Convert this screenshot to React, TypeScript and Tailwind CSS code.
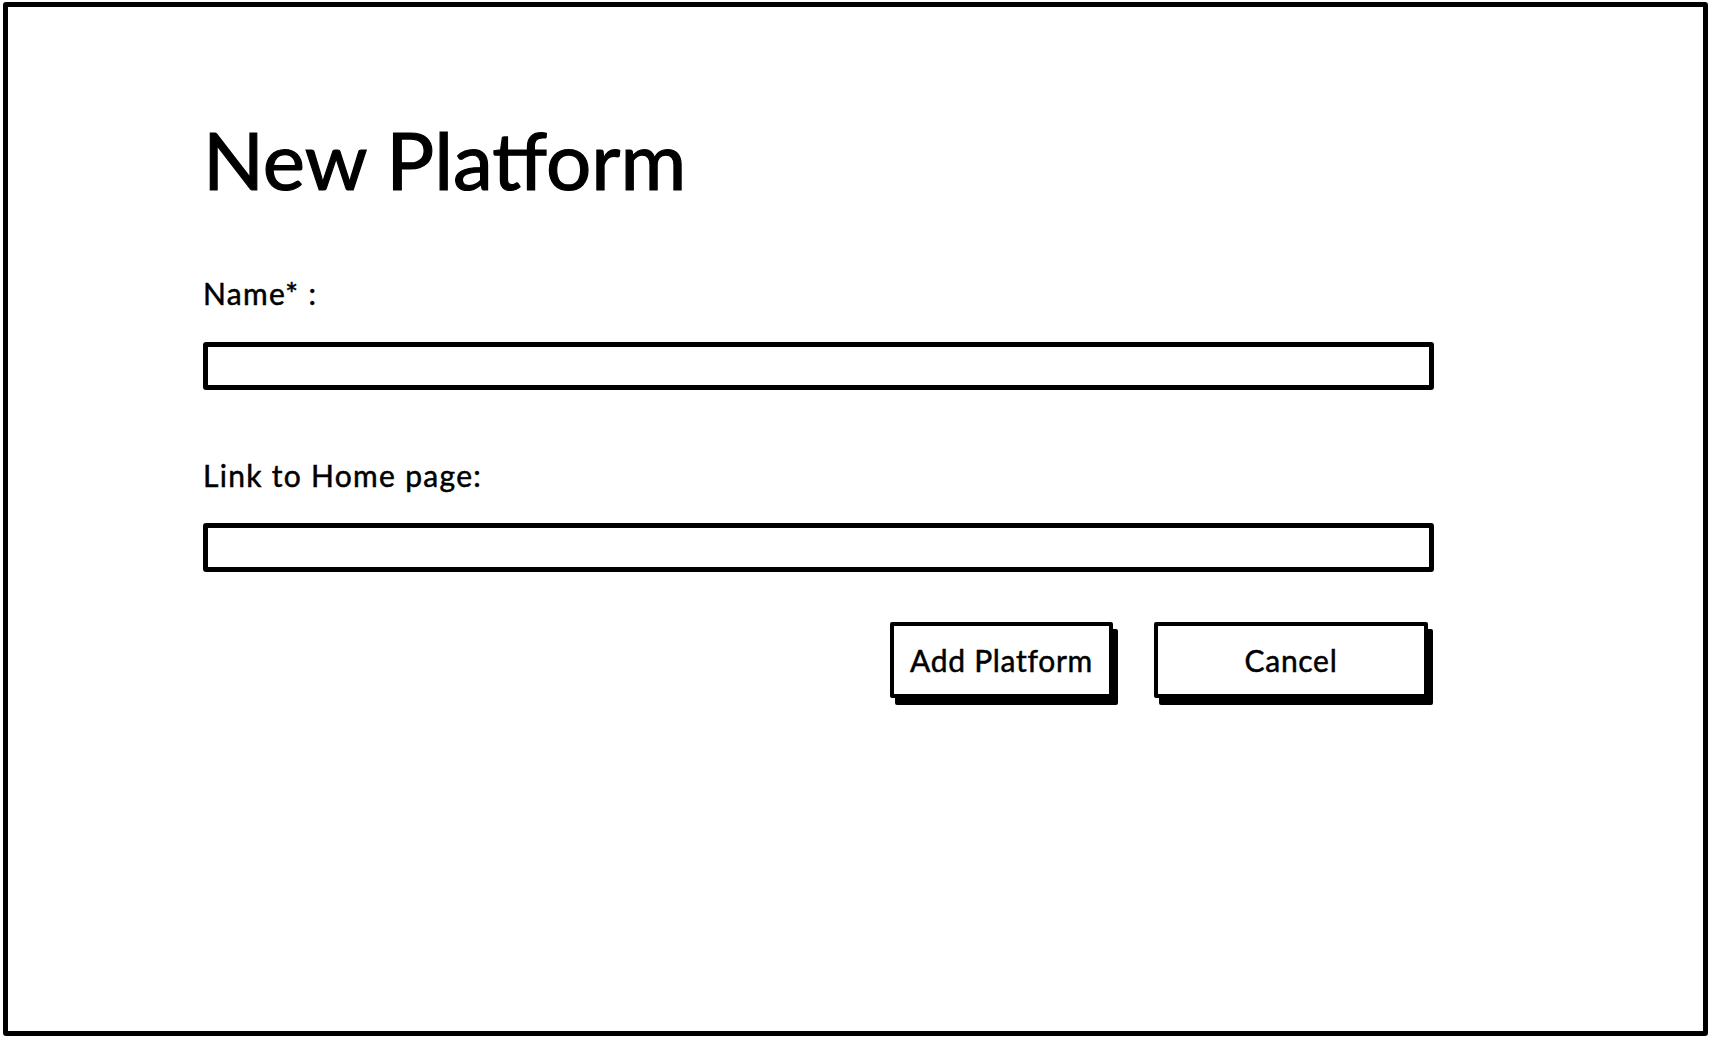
import React, { useState } from 'react';

const font = { fontFamily: 'Lato, "Noto Sans", sans-serif' };

const SketchButton: React.FC<{ label: string; width: string; onClick?: () => void }> = ({ label, width, onClick }) => (
    <button
        onClick={onClick}
        className={`${width} h-[76px] flex items-center justify-center bg-white border-4 border-black rounded-[2px] shadow-[5px_7px_0_#000] text-[30px] leading-none tracking-[0.7px] [-webkit-text-stroke:0.5px_black] text-black`}
    >
        {label}
    </button>
);

const App: React.FC = () => {
    const [name, setName] = useState('');
    const [link, setLink] = useState('');

    return (
        <div className="w-[1710px] h-[1038px] bg-white pt-[2px] pl-[3px] pr-[2px] pb-[2px]" style={font}>
            <div className="h-full border-[5px] border-black rounded-[3px] pl-[195px] pt-[112px]">
                <div className="w-[1231px] flex flex-col">
                    <h1 className="text-[80px] leading-none text-black [-webkit-text-stroke:1.2px_black]">New Platform</h1>

                    <label className="mt-[79px] text-[30px] leading-none tracking-[1.3px] [-webkit-text-stroke:0.5px_black] text-black">Name* :</label>
                    <input
                        value={name}
                        onChange={e => setName(e.target.value)}
                        className="mt-[34px] h-[48px] w-full border-[5px] border-black rounded-[3px] px-3 text-[24px] outline-none"
                    />

                    <label className="mt-[70px] text-[30px] leading-none tracking-[1.3px] [-webkit-text-stroke:0.5px_black] text-black">Link to Home page:</label>
                    <input
                        value={link}
                        onChange={e => setLink(e.target.value)}
                        className="mt-[33px] h-[49px] w-full border-[5px] border-black rounded-[3px] px-3 text-[24px] outline-none"
                    />

                    <div className="mt-[50px] flex justify-end gap-[41px] pr-[6px]">
                        <SketchButton label="Add Platform" width="w-[223px]" />
                        <SketchButton label="Cancel" width="w-[274px]" />
                    </div>
                </div>
            </div>
        </div>
    );
};

export default App;
